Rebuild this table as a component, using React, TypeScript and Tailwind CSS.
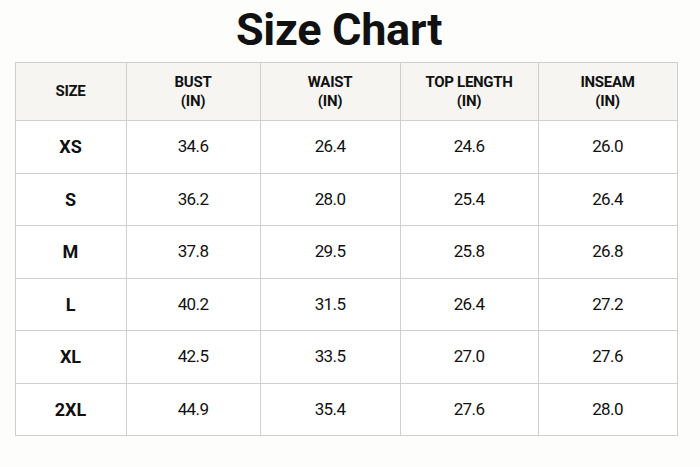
import React from 'react';

const COLUMNS = [
  { label: 'SIZE', sub: '', width: 'w-[111px]' },
  { label: 'BUST', sub: '(IN)', width: 'w-[134px]' },
  { label: 'WAIST', sub: '(IN)', width: 'w-[140px]' },
  { label: 'TOP LENGTH', sub: '(IN)', width: 'w-[138px]' },
  { label: 'INSEAM', sub: '(IN)', width: 'w-[139px]' },
];

const ROWS: [string, string, string, string, string][] = [
  ['XS', '34.6', '26.4', '24.6', '26.0'],
  ['S', '36.2', '28.0', '25.4', '26.4'],
  ['M', '37.8', '29.5', '25.8', '26.8'],
  ['L', '40.2', '31.5', '26.4', '27.2'],
  ['XL', '42.5', '33.5', '27.0', '27.6'],
  ['2XL', '44.9', '35.4', '27.6', '28.0'],
];

const App: React.FC = () => {
  return (
    <div className="w-[700px] h-[467px] bg-[#fdfdfc] text-[#111] font-['Roboto',sans-serif] flex flex-col items-center">
      <h1 className="mt-[4px] mr-[22px] text-[45px] leading-[52px] font-bold tracking-[-0.3px]">Size Chart</h1>
      <table className="mt-[6px] ml-[-8px] border-collapse table-fixed">
        <thead>
          <tr className="h-[58px] bg-[#f6f5f1]">
            {COLUMNS.map((c) => (
              <th
                key={c.label}
                className={`${c.width} border border-[#cfcfcf] text-[15px] leading-[19px] tracking-[-0.3px] font-bold text-center align-middle`}
              >
                {c.label}
                {c.sub && (
                  <>
                    <br />
                    {c.sub}
                  </>
                )}
              </th>
            ))}
          </tr>
        </thead>
        <tbody>
          {ROWS.map((row) => (
            <tr key={row[0]} className="h-[52.5px] bg-white">
              {row.map((cell, i) => (
                <td
                  key={i}
                  className={`border border-[#cfcfcf] text-center align-middle ${i === 0 ? 'font-bold text-[18px]' : 'font-normal text-[17px] tracking-[-0.6px]'}`}
                >
                  {cell}
                </td>
              ))}
            </tr>
          ))}
        </tbody>
      </table>
    </div>
  );
};

export default App;
